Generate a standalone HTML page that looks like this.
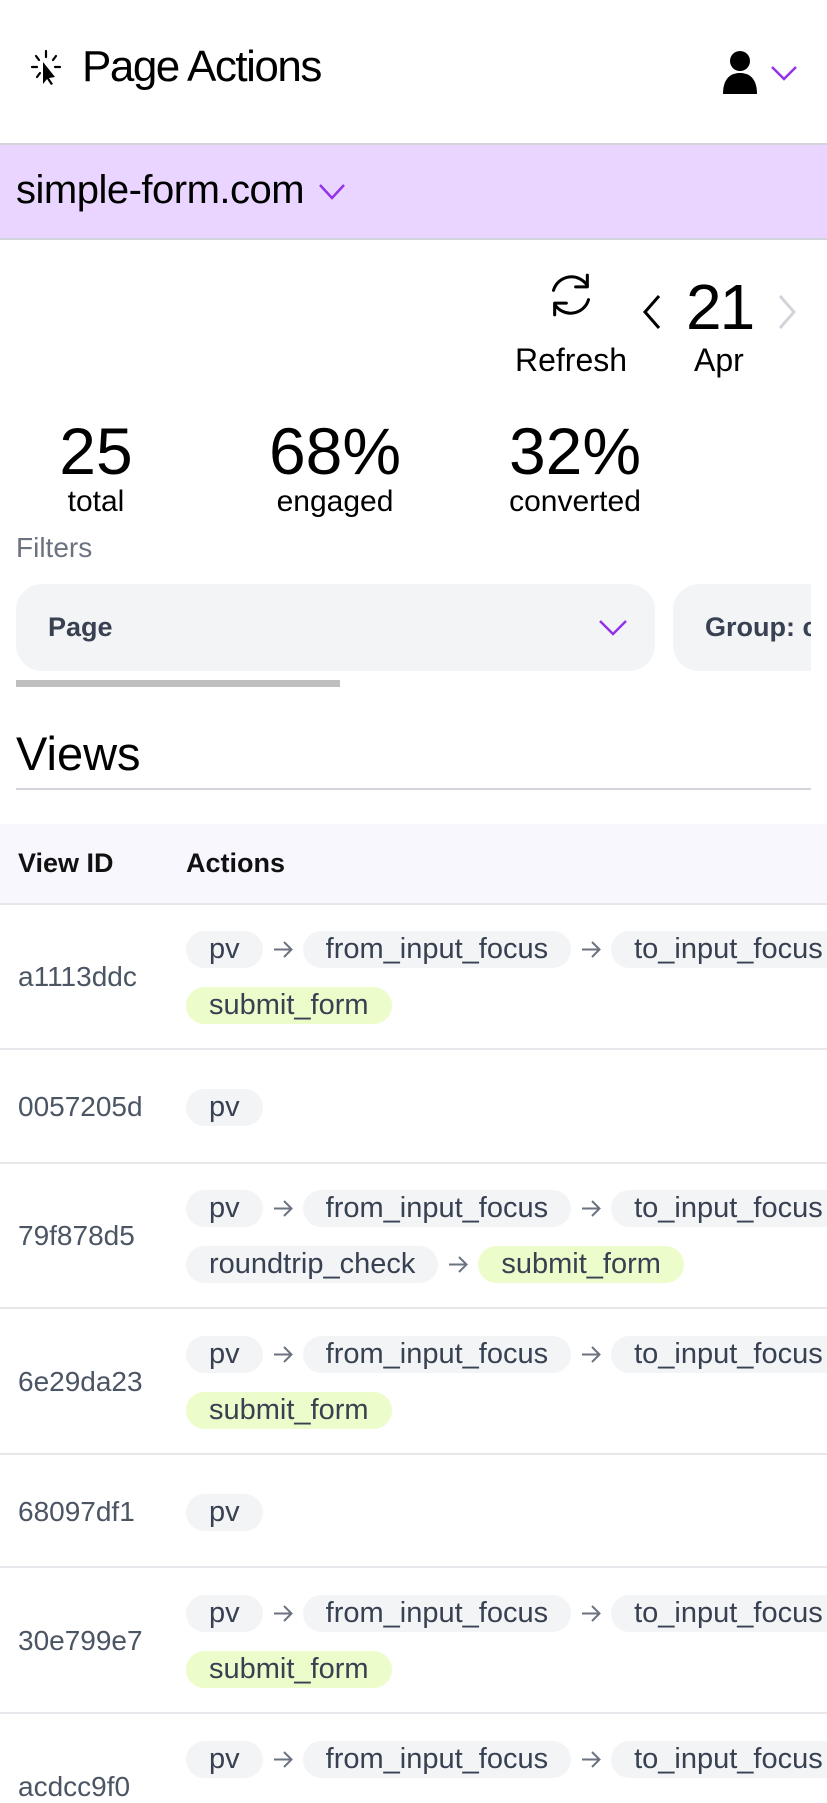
<!DOCTYPE html>
<html><head><meta charset="utf-8"><style>
*{margin:0;padding:0;box-sizing:border-box}
html,body{width:827px;height:1792px;overflow:hidden;background:#fff;font-family:"Liberation Sans",sans-serif;color:#000}
.a{position:absolute;white-space:nowrap}
.chip{display:inline-block;height:37px;line-height:37px;padding:0 23px;border-radius:19px;background:#f3f4f6;color:#374151;font-size:29px;vertical-align:top}
.g{background:#ecfccb}
.ar{display:inline-block;width:22px;margin:0 9px;vertical-align:top;height:37px}
.line{position:absolute;left:186px;white-space:nowrap;height:37px}
.id{position:absolute;left:18px;font-size:28px;color:#4b5563}
.sep{position:absolute;left:0;width:827px;height:2px;background:#e5e7eb}
</style></head><body>
<!-- header -->
<svg class="a" style="left:28px;top:48px" width="36" height="40" viewBox="0 0 36 40">
<g stroke="#000" stroke-width="2.2" stroke-linecap="round"><line x1="18" y1="3" x2="18" y2="9"/><line x1="8" y1="8" x2="11" y2="12"/><line x1="28" y1="8" x2="25" y2="12"/><line x1="4" y1="19" x2="9" y2="19"/><line x1="27" y1="19" x2="32" y2="19"/><line x1="9" y1="29" x2="12" y2="25"/></g>
<path d="M15 14 L15 36 L19 31 L23 37 L25 36 L21 30 L27 29 Z" fill="#000"/>
</svg>
<div class="a" style="left:82px;top:42px;font-size:44px;letter-spacing:-1.5px">Page Actions</div>
<svg class="a" style="left:721px;top:50px" width="40" height="46" viewBox="0 0 40 46"><circle cx="19" cy="11" r="10" fill="#000"/><path d="M2 44 C2 28 10 23 19 23 C28 23 36 28 36 44 Z" fill="#000"/></svg>
<svg class="a" style="left:770px;top:64px" width="28" height="18" viewBox="0 0 28 18"><path d="M2 3 L14 15 L26 3" fill="none" stroke="#9333ea" stroke-width="2.5"/></svg>
<div class="a" style="left:0;top:143px;width:827px;height:97px;background:#e9d5ff;border-top:2px solid #d1d5db;border-bottom:2px solid #d1d5db"></div>
<div class="a" style="left:16px;top:168px;font-size:40px;letter-spacing:-0.5px">simple-form.com</div>
<svg class="a" style="left:318px;top:182px" width="28" height="20" viewBox="0 0 28 20"><path d="M2 3 L14 16 L26 3" fill="none" stroke="#9333ea" stroke-width="2.5"/></svg>
<!-- refresh/date -->
<svg class="a" style="left:543px;top:267px" width="56" height="56" viewBox="0 0 24 24"><g fill="none" stroke="#000" stroke-width="1.3" stroke-linecap="round" stroke-linejoin="round"><path d="M4.5 10 A8 8 0 0 1 19 8"/><path d="M19 3.5 V8.5 H14"/><path d="M19.5 14 A8 8 0 0 1 5 16"/><path d="M5 20.5 V15.5 H10"/></g></svg>
<div class="a" style="left:515px;top:342px;font-size:32px">Refresh</div>
<svg class="a" style="left:640px;top:294px" width="24" height="36" viewBox="0 0 24 36"><path d="M19 2 L5 18 L19 34" fill="none" stroke="#000" stroke-width="3"/></svg>
<div class="a" style="left:686px;top:270px;font-size:64px;letter-spacing:-2px">21</div>
<div class="a" style="left:694px;top:342px;font-size:32px">Apr</div>
<svg class="a" style="left:775px;top:294px" width="24" height="36" viewBox="0 0 24 36"><path d="M5 2 L19 18 L5 34" fill="none" stroke="#d1d5db" stroke-width="3"/></svg>
<!-- stats -->
<div class="a" style="left:16px;width:160px;text-align:center;top:413px;font-size:66px">25</div>
<div class="a" style="left:16px;width:160px;text-align:center;top:485px;font-size:30px">total</div>
<div class="a" style="left:235px;width:200px;text-align:center;top:413px;font-size:66px">68%</div>
<div class="a" style="left:235px;width:200px;text-align:center;top:485px;font-size:30px">engaged</div>
<div class="a" style="left:475px;width:200px;text-align:center;top:413px;font-size:66px">32%</div>
<div class="a" style="left:475px;width:200px;text-align:center;top:485px;font-size:30px">converted</div>
<div class="a" style="left:16px;top:532px;font-size:28px;color:#6b7280">Filters</div>
<div class="a" style="left:16px;top:584px;width:639px;height:87px;border-radius:26px;background:#f3f4f6"></div>
<div class="a" style="left:48px;top:612px;font-size:27px;font-weight:bold;color:#374151">Page</div>
<svg class="a" style="left:598px;top:618px" width="30" height="20" viewBox="0 0 30 20"><path d="M2 3 L15 16 L28 3" fill="none" stroke="#9333ea" stroke-width="2.5"/></svg>
<div class="a" style="left:673px;top:584px;width:200px;height:87px;border-radius:26px 0 0 26px;background:#f3f4f6"></div>
<div class="a" style="left:705px;top:612px;font-size:27px;font-weight:bold;color:#374151;width:106px;overflow:hidden">Group: c</div>
<div class="a" style="left:811px;top:584px;width:16px;height:87px;background:#fff"></div>
<div class="a" style="left:16px;top:680px;width:324px;height:7px;background:#bfbfbf"></div>
<div class="a" style="left:16px;top:726px;font-size:47px">Views</div>
<div class="a" style="left:16px;top:788px;width:795px;height:2px;background:#d1d5db"></div>
<!-- table -->
<div class="a" style="left:0;top:824px;width:827px;height:80px;background:#f8f7fe"></div>
<div class="a" style="left:18px;top:848px;font-size:27px;font-weight:bold;color:#111">View ID</div>
<div class="a" style="left:186px;top:848px;font-size:27px;font-weight:bold;color:#111">Actions</div>
<div class="sep" style="top:903px"></div>

<div class="id" style="top:961px">a1113ddc</div>
<div class="line" style="top:931px"><span class="chip">pv</span><svg class="ar" viewBox="0 0 22 37"><path d="M2 18.5 H19 M12 11 L19.5 18.5 L12 26" fill="none" stroke="#6b7280" stroke-width="2"/></svg><span class="chip">from_input_focus</span><svg class="ar" viewBox="0 0 22 37"><path d="M2 18.5 H19 M12 11 L19.5 18.5 L12 26" fill="none" stroke="#6b7280" stroke-width="2"/></svg><span class="chip">to_input_focus</span></div>
<div class="line" style="top:987px"><span class="chip g">submit_form</span></div>
<div class="sep" style="top:1048px"></div>

<div class="id" style="top:1091px">0057205d</div>
<div class="line" style="top:1089px"><span class="chip">pv</span></div>
<div class="sep" style="top:1162px"></div>

<div class="id" style="top:1220px">79f878d5</div>
<div class="line" style="top:1190px"><span class="chip">pv</span><svg class="ar" viewBox="0 0 22 37"><path d="M2 18.5 H19 M12 11 L19.5 18.5 L12 26" fill="none" stroke="#6b7280" stroke-width="2"/></svg><span class="chip">from_input_focus</span><svg class="ar" viewBox="0 0 22 37"><path d="M2 18.5 H19 M12 11 L19.5 18.5 L12 26" fill="none" stroke="#6b7280" stroke-width="2"/></svg><span class="chip">to_input_focus</span></div>
<div class="line" style="top:1246px"><span class="chip">roundtrip_check</span><svg class="ar" viewBox="0 0 22 37"><path d="M2 18.5 H19 M12 11 L19.5 18.5 L12 26" fill="none" stroke="#6b7280" stroke-width="2"/></svg><span class="chip g">submit_form</span></div>
<div class="sep" style="top:1307px"></div>

<div class="id" style="top:1366px">6e29da23</div>
<div class="line" style="top:1336px"><span class="chip">pv</span><svg class="ar" viewBox="0 0 22 37"><path d="M2 18.5 H19 M12 11 L19.5 18.5 L12 26" fill="none" stroke="#6b7280" stroke-width="2"/></svg><span class="chip">from_input_focus</span><svg class="ar" viewBox="0 0 22 37"><path d="M2 18.5 H19 M12 11 L19.5 18.5 L12 26" fill="none" stroke="#6b7280" stroke-width="2"/></svg><span class="chip">to_input_focus</span></div>
<div class="line" style="top:1392px"><span class="chip g">submit_form</span></div>
<div class="sep" style="top:1453px"></div>

<div class="id" style="top:1496px">68097df1</div>
<div class="line" style="top:1494px"><span class="chip">pv</span></div>
<div class="sep" style="top:1566px"></div>

<div class="id" style="top:1625px">30e799e7</div>
<div class="line" style="top:1595px"><span class="chip">pv</span><svg class="ar" viewBox="0 0 22 37"><path d="M2 18.5 H19 M12 11 L19.5 18.5 L12 26" fill="none" stroke="#6b7280" stroke-width="2"/></svg><span class="chip">from_input_focus</span><svg class="ar" viewBox="0 0 22 37"><path d="M2 18.5 H19 M12 11 L19.5 18.5 L12 26" fill="none" stroke="#6b7280" stroke-width="2"/></svg><span class="chip">to_input_focus</span></div>
<div class="line" style="top:1651px"><span class="chip g">submit_form</span></div>
<div class="sep" style="top:1712px"></div>

<div class="id" style="top:1771px">acdcc9f0</div>
<div class="line" style="top:1741px"><span class="chip">pv</span><svg class="ar" viewBox="0 0 22 37"><path d="M2 18.5 H19 M12 11 L19.5 18.5 L12 26" fill="none" stroke="#6b7280" stroke-width="2"/></svg><span class="chip">from_input_focus</span><svg class="ar" viewBox="0 0 22 37"><path d="M2 18.5 H19 M12 11 L19.5 18.5 L12 26" fill="none" stroke="#6b7280" stroke-width="2"/></svg><span class="chip">to_input_focus</span></div>
</body></html>
